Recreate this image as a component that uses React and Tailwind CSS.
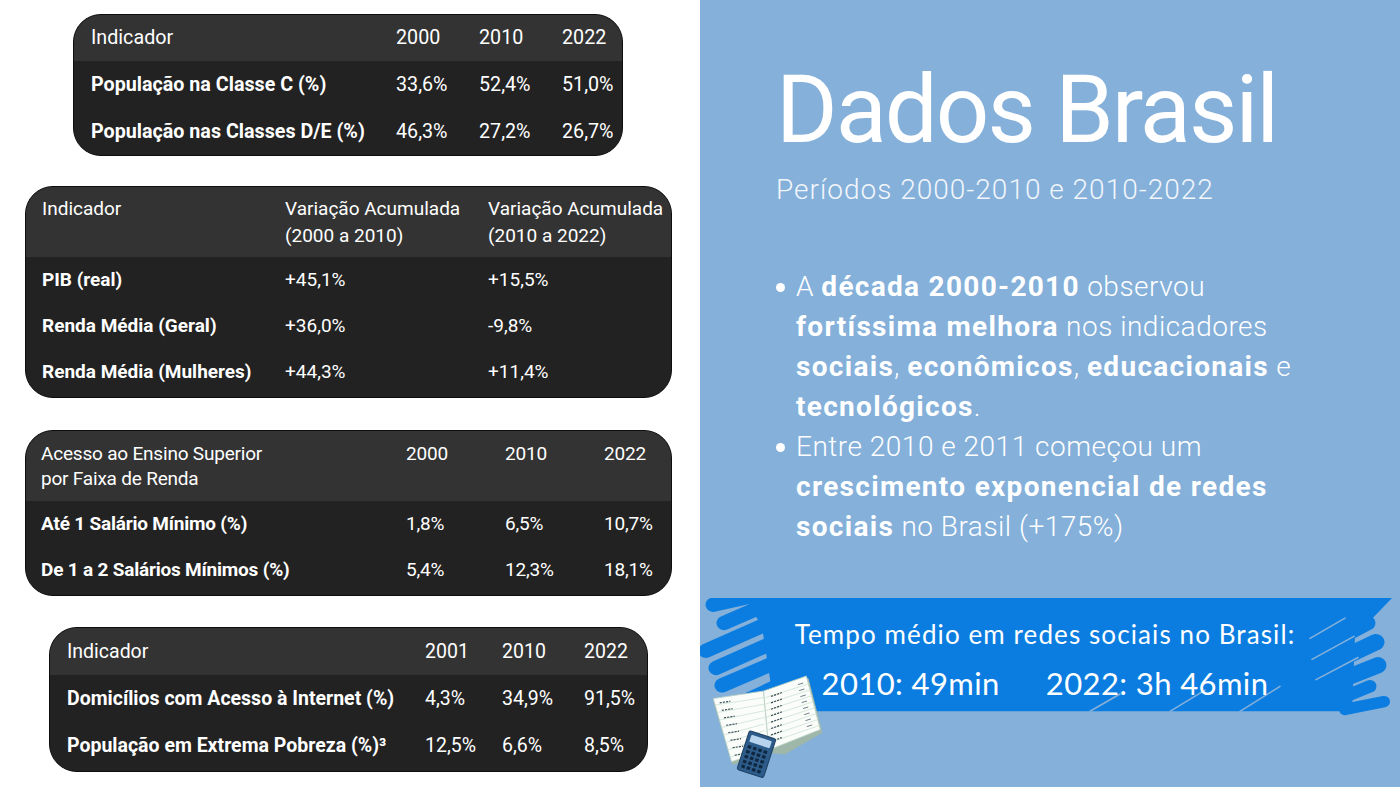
import React from "react";

const t1 = {
  head: ["Indicador", "2000", "2010", "2022"],
  rows: [
    ["População na Classe C (%)", "33,6%", "52,4%", "51,0%"],
    ["População nas Classes D/E (%)", "46,3%", "27,2%", "26,7%"],
  ],
};

const t2 = {
  head: [
    "Indicador",
    <>Variação Acumulada<br />(2000 a 2010)</>,
    <>Variação Acumulada<br />(2010 a 2022)</>,
  ],
  rows: [
    ["PIB (real)", "+45,1%", "+15,5%"],
    ["Renda Média (Geral)", "+36,0%", "-9,8%"],
    ["Renda Média (Mulheres)", "+44,3%", "+11,4%"],
  ],
};

const t3 = {
  head: [<>Acesso ao Ensino Superior<br />por Faixa de Renda</>, "2000", "2010", "2022"],
  rows: [
    ["Até 1 Salário Mínimo (%)", "1,8%", "6,5%", "10,7%"],
    ["De 1 a 2 Salários Mínimos (%)", "5,4%", "12,3%", "18,1%"],
  ],
};

const t4 = {
  head: ["Indicador", "2001", "2010", "2022"],
  rows: [
    ["Domicílios com Acesso à Internet (%)", "4,3%", "34,9%", "91,5%"],
    ["População em Extrema Pobreza (%)³", "12,5%", "6,6%", "8,5%"],
  ],
};

function DataTable({ data, wrap, grid, headCls, rowCls, pad }) {
  return (
    <div
      className={`${wrap} overflow-hidden rounded-[28px] border border-[#0d0d0d] bg-[#222222] text-white font-['Roboto',sans-serif]`}
    >
      <div className={`grid ${grid} ${pad} ${headCls} bg-[#333333]`}>
        {data.head.map((h, i) => (
          <div key={i}>{h}</div>
        ))}
      </div>
      {data.rows.map((r, i) => (
        <div key={i} className={`grid ${grid} ${pad} ${rowCls} items-center`}>
          {r.map((c, j) => (
            <div key={j} className={j === 0 ? "font-bold" : ""}>
              {c}
            </div>
          ))}
        </div>
      ))}
    </div>
  );
}

function Banner() {
  const blue = "#0b7de0";
  const bg = "#84b0da";
  return (
    <svg
      className="absolute inset-0 w-full h-full"
      viewBox="0 0 700 125"
      preserveAspectRatio="none"
    >
      <polygon points="45,0 692,0 655,40 652,118 75,118 62,30" fill={blue} />
      <g stroke={blue} strokeLinecap="round" strokeWidth="15">
        <line x1="13" y1="7" x2="60" y2="-4" />
        <line x1="24" y1="26" x2="95" y2="-6" />
        <line x1="6" y1="55" x2="95" y2="14" />
        <line x1="16" y1="73" x2="100" y2="34" />
        <line x1="22" y1="91" x2="105" y2="54" />
        <line x1="40" y1="110" x2="110" y2="76" />
      </g>
      <g stroke={blue} strokeLinecap="round">
        <line x1="610" y1="58" x2="668" y2="26" strokeWidth="15" />
        <line x1="615" y1="76" x2="676" y2="46" strokeWidth="17" />
        <line x1="620" y1="94" x2="678" y2="70" strokeWidth="17" />
        <line x1="628" y1="110" x2="670" y2="92" strokeWidth="13" />
        <line x1="645" y1="116" x2="684" y2="108" strokeWidth="12" />
      </g>
      <g stroke={bg} strokeLinecap="round" strokeWidth="1.6">
        <line x1="610" y1="42" x2="645" y2="21" />
        <line x1="612" y1="64" x2="654" y2="40" />
        <line x1="616" y1="85" x2="658" y2="62" />
        <line x1="390" y1="118" x2="420" y2="100" />
        <line x1="470" y1="118" x2="505" y2="96" />
        <line x1="540" y1="118" x2="580" y2="92" />
      </g>
    </svg>
  );
}

function BookCalc() {
  const rowsL = [0, 1, 2, 3, 4, 5, 6, 7];
  return (
    <svg className="absolute left-[10px] top-[77px]" width="120" height="107" viewBox="0 0 112 100">
      {/* book thickness */}
      <polygon points="3,25 50,18 92,3 105,54 70,74 55,73 21,84" fill="#9fb7a8" />
      {/* left page */}
      <polygon points="3,22 50,15 55,70 20,81" fill="#fbfdfb" stroke="#b9cfc2" strokeWidth="0.8" />
      {/* right page */}
      <polygon points="50,15 90,1 103,51 55,70" fill="#fbfdfb" stroke="#b9cfc2" strokeWidth="0.8" />
      {rowsL.map((i) => (
        <g key={i}>
          <line x1={5 + i * 2} y1={28 + i * 7} x2={51} y2={21 + i * 6.2} stroke="#c9e0d2" strokeWidth="0.7" />
          <line x1={52} y1={21 + i * 6.2} x2={93 + i * 1.3} y2={8 + i * 5.6} stroke="#c9e0d2" strokeWidth="0.7" />
          <line x1={9 + i * 2} y1={26 + i * 7} x2={19 + i * 2} y2={24.5 + i * 7} stroke="#3a4a52" strokeWidth="1.1" strokeDasharray="2 1" />
          <line x1={57} y1={20 + i * 6} x2={67} y2={16.5 + i * 6} stroke="#3a4a52" strokeWidth="1.1" strokeDasharray="2 1" />
          <line x1={82 + i * 1.2} y1={9 + i * 5.6} x2={87 + i * 1.2} y2={7.5 + i * 5.6} stroke="#6a7a82" strokeWidth="0.9" />
        </g>
      ))}
      {/* calculator */}
      <g transform="rotate(18 43 75)">
        <rect x="30" y="55" width="26" height="38" rx="2" fill="#2d5b8a" stroke="#1f4266" strokeWidth="1" />
        <rect x="33" y="58" width="20" height="7" rx="1" fill="#b7d3ee" />
        {[0, 1, 2, 3, 4].map((r) =>
          [0, 1, 2, 3].map((c) => (
            <rect key={`${r}-${c}`} x={33 + c * 5.2} y={68 + r * 4.8} width="3.4" height="3" rx="0.6" fill="#0f2840" />
          ))
        )}
      </g>
    </svg>
  );
}

const B = ({ children }) => (
  <b className="font-bold tracking-[1.3px]">{children}</b>
);

export default function App() {
  return (
    <div className="flex w-[1400px] h-[787px] overflow-hidden bg-white">
      <div className="w-[700px] flex flex-col">
        <DataTable
          data={t1}
          wrap="ml-[73px] mt-[14px] w-[550px] text-[19.7px]"
          grid="grid-cols-[305px_83px_83px_1fr]"
          pad="pl-[17px]"
          headCls="h-[46px] items-center"
          rowCls="h-[47px]"
        />
        <DataTable
          data={t2}
          wrap="ml-[25px] mt-[30px] w-[647px] pb-[2px] text-[19px]"
          grid="grid-cols-[243px_203px_1fr]"
          pad="pl-[16px]"
          headCls="h-[70px] pt-[8px] leading-[27px]"
          rowCls="h-[46px]"
        />
        <DataTable
          data={t3}
          wrap="ml-[25px] mt-[32px] w-[647px] pb-[2px] text-[19px]"
          grid="grid-cols-[365px_99px_99px_1fr]"
          pad="pl-[15px]"
          headCls="h-[70px] pt-[10px] leading-[25px] tracking-[-0.2px]"
          rowCls="h-[46px] tracking-[-0.2px]"
        />
        <DataTable
          data={t4}
          wrap="ml-[49px] mt-[31px] w-[599px] pb-[2px] text-[19.5px]"
          grid="grid-cols-[358px_77px_82px_1fr]"
          pad="pl-[17px]"
          headCls="h-[47px] items-center"
          rowCls="h-[47px]"
        />
      </div>

      <div className="w-[700px] h-[787px] bg-[#84b0da] flex flex-col text-white font-['Roboto',sans-serif]">
        <div className="pl-[76px]">
          <h1 className="mt-[63px] text-[94px] leading-none tracking-[-2px] font-normal">
            Dados Brasil
          </h1>
          <p className="mt-[15px] text-[28px] leading-[36px] font-light tracking-[1px] text-[#f2f6fb]">
            Períodos 2000-2010 e 2010-2022
          </p>
          <ul className="mt-[59px] text-[28px] leading-[40px] font-light tracking-[0.5px]">
            <li className="flex">
              <span className="w-[20px] shrink-0 flex justify-start pt-[16px]">
                <span className="block w-[9px] h-[9px] rounded-full bg-white" />
              </span>
              <span>
                A <B>década 2000-2010</B> observou
                <br />
                <B>fortíssima melhora</B> nos indicadores
                <br />
                <B>sociais</B>, <B>econômicos</B>, <B>educacionais</B> e
                <br />
                <B>tecnológicos</B>.
              </span>
            </li>
            <li className="flex">
              <span className="w-[20px] shrink-0 flex justify-start pt-[16px]">
                <span className="block w-[9px] h-[9px] rounded-full bg-white" />
              </span>
              <span>
                Entre 2010 e 2011 começou um
                <br />
                <B>crescimento exponencial de redes</B>
                <br />
                <B>sociais</B> no Brasil (+175%)
              </span>
            </li>
          </ul>
        </div>

        <div className="relative mt-[51px] h-[120px] w-[700px]">
          <Banner />
          <div className="relative flex flex-col items-center pr-[10px] font-['Lato',sans-serif] text-white">
            <div className="pt-[20px] text-[26px] leading-[32px] tracking-[1.1px]">
              Tempo médio em redes sociais no Brasil:
            </div>
            <div className="mt-[13px] flex gap-[46px] text-[31px] leading-[40px] tracking-[0.4px]">
              <span>2010: 49min</span>
              <span>2022: 3h 46min</span>
            </div>
          </div>
          <BookCalc />
        </div>
      </div>
    </div>
  );
}
